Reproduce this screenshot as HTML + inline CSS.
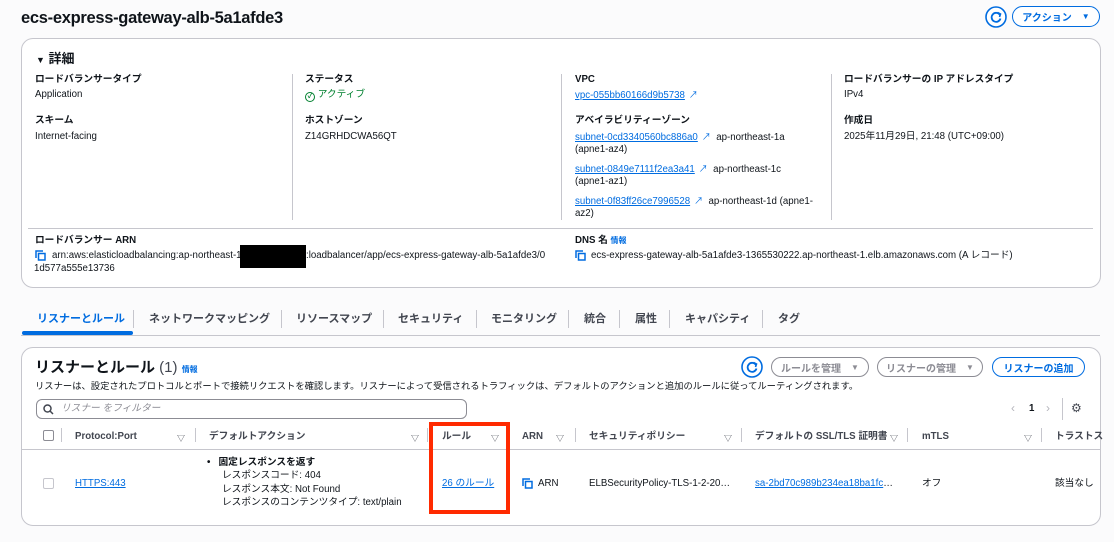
<!DOCTYPE html>
<html><head><meta charset="utf-8"><style>
*{box-sizing:border-box;margin:0;padding:0}
body{width:1114px;height:542px;background:#fbfbfc;font-family:"Liberation Sans","Noto Sans CJK JP",sans-serif;color:#0f141a;font-size:9.7px;position:relative;overflow:hidden}
.a{position:absolute;white-space:nowrap;line-height:12px}
.b{font-weight:bold}
.l{color:#006ce0;text-decoration:underline}
.box{position:absolute;background:#fff;border:1px solid #c6c6cd;border-radius:12px}
.vd{position:absolute;width:1px;background:#c6c6cd}
.hd{position:absolute;height:1px;background:#c6c6cd}
.btn{position:absolute;border:1px solid #8c8c94;border-radius:12px;color:#8c8c94;font-size:10px;font-weight:bold;display:flex;align-items:center;justify-content:center;gap:10px;background:#fff}
.tab{position:absolute;top:312px;font-size:11px;font-weight:bold;color:#424650;line-height:14px}
.ts{position:absolute;top:310px;width:1px;height:18px;background:#c6c6cd}
.th{position:absolute;top:431px;font-weight:bold;color:#424650;line-height:12px}
.tri{position:absolute;top:433px;font-size:8px;color:#424650}
.ext{display:inline-block;font-size:9px;color:#006ce0;margin-left:4px;text-decoration:none}
</style></head><body>
<div class="a b" style="left:21px;top:7px;font-size:16.5px;line-height:22px;letter-spacing:-0.3px">ecs-express-gateway-alb-5a1afde3</div>
<svg class="a" style="left:985px;top:6px" width="22" height="22"><circle cx="11" cy="11" r="10" fill="#fff" stroke="#006ce0" stroke-width="1.6"/><path d="M15 9a4.5 4.5 0 1 0 0.5 3.5" fill="none" stroke="#006ce0" stroke-width="1.8"/><path d="M12.5 6.5l3 1.5-1 3" fill="none" stroke="#006ce0" stroke-width="1.6"/></svg>
<div class="btn" style="left:1012px;top:6px;width:88px;height:21px;border-color:#006ce0;border-width:1.5px;color:#006ce0">アクション <span style="font-size:8px">▼</span></div>

<div class="box" style="left:21px;top:38px;width:1080px;height:250px"></div>
<div class="a b" style="left:36px;top:51px;font-size:13px;line-height:15px"><span style="font-size:9px">▼</span> 詳細</div>
<div class="vd" style="left:292px;top:74px;height:146px"></div>
<div class="vd" style="left:561px;top:74px;height:146px"></div>
<div class="vd" style="left:831px;top:74px;height:146px"></div>
<div class="a b" style="left:35px;top:74px">ロードバランサータイプ</div>
<div class="a" style="left:35px;top:89px">Application</div>
<div class="a b" style="left:35px;top:115px">スキーム</div>
<div class="a" style="left:35px;top:131px">Internet-facing</div>
<div class="a b" style="left:305px;top:74px">ステータス</div>
<div class="a" style="left:305px;top:89px;color:#00802f"><span style="display:inline-block;width:10px;height:10px;border:1.5px solid #00802f;border-radius:50%;vertical-align:-1px;font-size:7px;line-height:7px;text-align:center;font-weight:bold">✓</span> アクティブ</div>
<div class="a b" style="left:305px;top:115px">ホストゾーン</div>
<div class="a" style="left:305px;top:131px">Z14GRHDCWA56QT</div>
<div class="a b" style="left:575px;top:74px">VPC</div>
<div class="a" style="left:575px;top:89px"><span class="l">vpc-055bb60166d9b5738</span><span class="ext">↗</span></div>
<div class="a b" style="left:575px;top:115px">アベイラビリティーゾーン</div>
<div class="a" style="left:575px;top:131px"><span class="l">subnet-0cd3340560bc886a0</span><span class="ext">↗</span>&nbsp; ap-northeast-1a</div>
<div class="a" style="left:575px;top:144px">(apne1-az4)</div>
<div class="a" style="left:575px;top:163px"><span class="l">subnet-0849e7111f2ea3a41</span><span class="ext">↗</span>&nbsp; ap-northeast-1c</div>
<div class="a" style="left:575px;top:176px">(apne1-az1)</div>
<div class="a" style="left:575px;top:195px"><span class="l">subnet-0f83ff26ce7996528</span><span class="ext">↗</span>&nbsp; ap-northeast-1d (apne1-</div>
<div class="a" style="left:575px;top:208px">az2)</div>
<div class="a b" style="left:844px;top:74px">ロードバランサーの IP アドレスタイプ</div>
<div class="a" style="left:844px;top:89px">IPv4</div>
<div class="a b" style="left:844px;top:115px">作成日</div>
<div class="a" style="left:844px;top:131px">2025年11月29日, 21:48 (UTC+09:00)</div>
<div class="hd" style="left:28px;top:228px;width:1065px"></div>
<div class="a b" style="left:35px;top:235px">ロードバランサー ARN</div>
<svg class="a" style="left:35px;top:250px" width="11" height="11"><path d="M1 8V1h7" fill="none" stroke="#006ce0" stroke-width="1.5"/><rect x="3.5" y="3.5" width="6.5" height="6.5" fill="none" stroke="#006ce0" stroke-width="1.5"/></svg>
<div class="a" style="left:52px;top:250px">arn:aws:elasticloadbalancing:ap-northeast-1:</div>
<div class="a" style="left:240px;top:245px;width:66px;height:23px;background:#000"></div>
<div class="a" style="left:306px;top:250px">:loadbalancer/app/ecs-express-gateway-alb-5a1afde3/0</div>
<div class="a" style="left:34px;top:263px">1d577a555e13736</div>
<div class="a b" style="left:575px;top:235px">DNS 名 <span style="color:#006ce0;font-size:8px">情報</span></div>
<svg class="a" style="left:575px;top:250px" width="11" height="11"><path d="M1 8V1h7" fill="none" stroke="#006ce0" stroke-width="1.5"/><rect x="3.5" y="3.5" width="6.5" height="6.5" fill="none" stroke="#006ce0" stroke-width="1.5"/></svg>
<div class="a" style="left:591px;top:250px">ecs-express-gateway-alb-5a1afde3-1365530222.ap-northeast-1.elb.amazonaws.com (A レコード)</div>

<div class="tab" style="left:37px;color:#006ce0">リスナーとルール</div>
<div class="a" style="left:22px;top:331px;width:111px;height:4px;background:#006ce0;border-radius:2px"></div>
<div class="ts" style="left:133px"></div>
<div class="tab" style="left:149px">ネットワークマッピング</div>
<div class="ts" style="left:281px"></div>
<div class="tab" style="left:296px">リソースマップ</div>
<div class="ts" style="left:383px"></div>
<div class="tab" style="left:398px">セキュリティ</div>
<div class="ts" style="left:476px"></div>
<div class="tab" style="left:491px">モニタリング</div>
<div class="ts" style="left:568px"></div>
<div class="tab" style="left:584px">統合</div>
<div class="ts" style="left:619px"></div>
<div class="tab" style="left:635px">属性</div>
<div class="ts" style="left:669px"></div>
<div class="tab" style="left:685px">キャパシティ</div>
<div class="ts" style="left:762px"></div>
<div class="tab" style="left:778px">タグ</div>
<div class="hd" style="left:21px;top:335px;width:1079px"></div>

<div class="box" style="left:21px;top:347px;width:1080px;height:179px"></div>
<div class="a b" style="left:35px;top:359px;font-size:15px;line-height:18px">リスナーとルール <span style="font-weight:normal;color:#424650">(1)</span> <span style="color:#006ce0;font-size:8px">情報</span></div>
<div class="a" style="left:35px;top:380px;font-size:9.3px">リスナーは、設定されたプロトコルとポートで接続リクエストを確認します。リスナーによって受信されるトラフィックは、デフォルトのアクションと追加のルールに従ってルーティングされます。</div>
<svg class="a" style="left:741px;top:356px" width="22" height="22"><circle cx="11" cy="11" r="10" fill="#fff" stroke="#006ce0" stroke-width="1.6"/><path d="M15 9a4.5 4.5 0 1 0 0.5 3.5" fill="none" stroke="#006ce0" stroke-width="1.8"/><path d="M12.5 6.5l3 1.5-1 3" fill="none" stroke="#006ce0" stroke-width="1.6"/></svg>
<div class="btn" style="left:771px;top:357px;width:98px;height:20px">ルールを管理 <span style="font-size:8px">▼</span></div>
<div class="btn" style="left:877px;top:357px;width:106px;height:20px">リスナーの管理 <span style="font-size:8px">▼</span></div>
<div class="btn" style="left:992px;top:357px;width:93px;height:20px;border-color:#006ce0;border-width:1.5px;color:#006ce0">リスナーの追加</div>
<div class="a" style="left:36px;top:399px;width:431px;height:20px;border:1px solid #8c8c94;border-radius:6px;background:#fff"></div>
<svg class="a" style="left:43px;top:404px" width="11" height="11"><circle cx="4.5" cy="4.5" r="3.5" fill="none" stroke="#424650" stroke-width="1.5"/><path d="M7 7l3 3" stroke="#424650" stroke-width="1.5"/></svg>
<div class="a" style="left:61px;top:403px;color:#8c8c94;font-style:italic">リスナー をフィルター</div>
<div class="a" style="left:1011px;top:402px;color:#b4b4bb;font-size:12px">‹</div>
<div class="a b" style="left:1029px;top:403px">1</div>
<div class="a" style="left:1046px;top:402px;color:#b4b4bb;font-size:12px">›</div>
<div class="vd" style="left:1062px;top:398px;height:22px"></div>
<div class="a" style="left:1071px;top:402px;font-size:12px;color:#424650">⚙</div>

<div class="a" style="left:43px;top:430px;width:11px;height:11px;border:1px solid #8c8c94;border-radius:2px;background:#fff"></div>
<div class="vd" style="left:61px;top:428px;height:14px"></div>
<div class="th" style="left:75px">Protocol:Port</div><div class="tri" style="left:177px">▽</div><div class="vd" style="left:195px;top:428px;height:14px"></div>
<div class="th" style="left:209px">デフォルトアクション</div><div class="tri" style="left:411px">▽</div><div class="vd" style="left:427px;top:428px;height:14px"></div>
<div class="th" style="left:442px">ルール</div><div class="tri" style="left:491px">▽</div>
<div class="th" style="left:522px">ARN</div><div class="tri" style="left:556px">▽</div><div class="vd" style="left:575px;top:428px;height:14px"></div>
<div class="th" style="left:589px">セキュリティポリシー</div><div class="tri" style="left:724px">▽</div><div class="vd" style="left:741px;top:428px;height:14px"></div>
<div class="th" style="left:755px">デフォルトの SSL/TLS 証明書</div><div class="tri" style="left:890px">▽</div><div class="vd" style="left:907px;top:428px;height:14px"></div>
<div class="th" style="left:922px">mTLS</div><div class="tri" style="left:1024px">▽</div><div class="vd" style="left:1041px;top:428px;height:14px"></div>
<div class="th" style="left:1055px">トラストス</div>
<div class="hd" style="left:22px;top:449px;width:1078px"></div>

<div class="a" style="left:43px;top:478px;width:11px;height:11px;border:1px solid #c6c6cd;border-radius:2px"></div>
<div class="a l" style="left:75px;top:478px">HTTPS:443</div>
<div class="a b" style="left:207px;top:457px">•&nbsp;&nbsp; 固定レスポンスを返す</div>
<div class="a" style="left:222px;top:470px">レスポンスコード: 404</div>
<div class="a" style="left:222px;top:484px">レスポンス本文: Not Found</div>
<div class="a" style="left:222px;top:497px">レスポンスのコンテンツタイプ: text/plain</div>
<div class="a l" style="left:442px;top:478px">26 のルール</div>
<div class="a" style="left:429px;top:422px;width:81px;height:92px;border:4px solid #ff2a00"></div>
<svg class="a" style="left:522px;top:478px" width="11" height="11"><path d="M1 8V1h7" fill="none" stroke="#006ce0" stroke-width="1.5"/><rect x="3.5" y="3.5" width="6.5" height="6.5" fill="none" stroke="#006ce0" stroke-width="1.5"/></svg>
<div class="a" style="left:538px;top:478px">ARN</div>
<div class="a" style="left:589px;top:478px">ELBSecurityPolicy-TLS-1-2-20…</div>
<div class="a" style="left:755px;top:478px"><span class="l">sa-2bd70c989b234ea18ba1fc</span>…</div>
<div class="a" style="left:922px;top:478px">オフ</div>
<div class="a" style="left:1055px;top:478px">該当なし</div>
</body></html>
